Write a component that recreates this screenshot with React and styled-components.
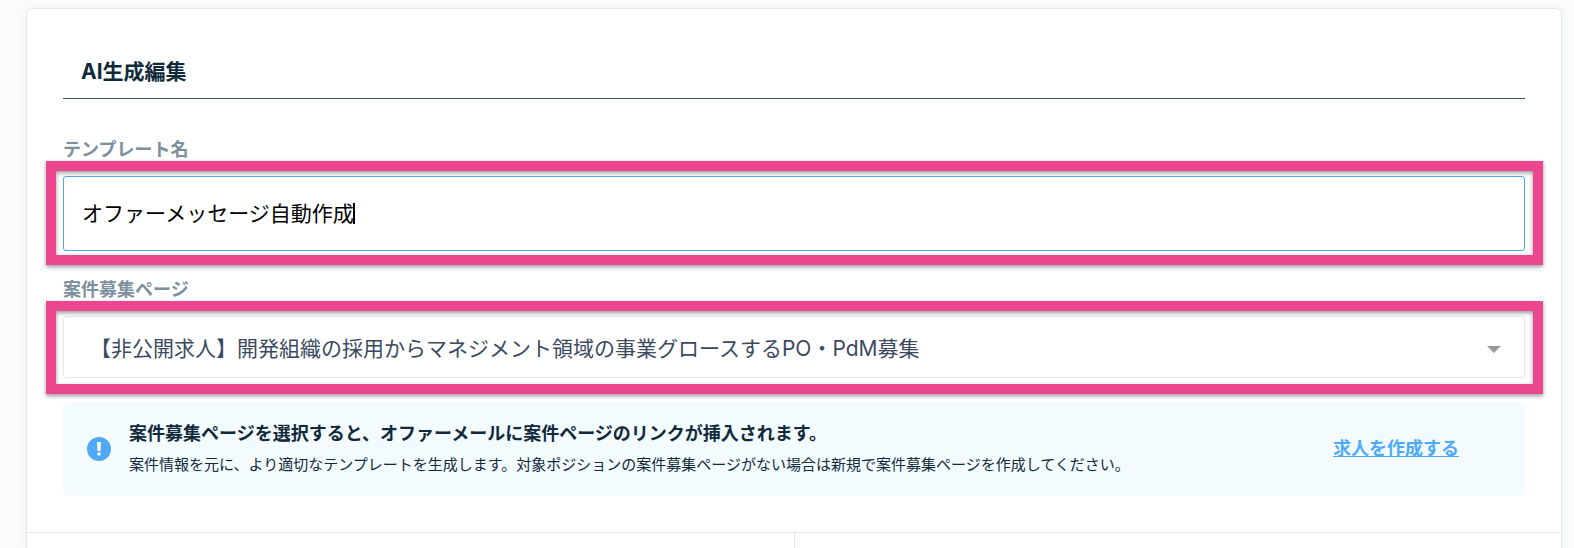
import React, { useState } from "react";
import styled, { createGlobalStyle } from "styled-components";

const JOBS = [
  "【非公開求人】開発組織の採用からマネジメント領域の事業グロースするPO・PdM募集",
];

function TemplateField() {
  const [name, setName] = useState("オファーメッセージ自動作成");
  return (
    <Field>
      <Label htmlFor="template-name">テンプレート名</Label>
      <Control $bottom={14}>
        <TextInput
          id="template-name"
          type="text"
          autoFocus
          value={name}
          onChange={(e) => setName(e.target.value)}
        />
        <CaretLine aria-hidden="true" />
      </Control>
    </Field>
  )
}
function JobField() {
  return (
    <Field>
      <Label htmlFor="job-page">案件募集ページ</Label>
      <Control $bottom={16}>
        <Select id="job-page" defaultValue={JOBS[0]}>
          {JOBS.map((job) => (
            <option key={job} value={job}>{job}</option>
          ))}
        </Select>
        <Arrow viewBox="0 0 14 7" aria-hidden="true">
          <path d="M0 0h14L7 7z" fill="#999" />
        </Arrow>
      </Control>
    </Field>
  )
}
function Notice() {
  return (
    <NoticeBox>
      <NoticeIcon viewBox="0 0 24 24" aria-hidden="true">
        <circle cx="12" cy="12" r="12" fill="#4faaf6" />
        <path d="M10 5h4l-.5 9h-3z" fill="#fff" />
        <circle cx="12" cy="17" r="1.8" fill="#fff" />
      </NoticeIcon>
      <NoticeBody>
        <NoticeTitle>案件募集ページを選択すると、オファーメールに案件ページのリンクが挿入されます。</NoticeTitle>
        <NoticeText>案件情報を元に、より適切なテンプレートを生成します。対象ポジションの案件募集ページがない場合は新規で案件募集ページを作成してください。</NoticeText>
      </NoticeBody>
      <CreateLink href="#create">求人を作成する</CreateLink>
    </NoticeBox>
  )
}
function App() {
  return (
    <>
      <GlobalStyle />
      <Page>
        <Card>
          <Form>
            <Title>AI生成編集</Title>
            <TemplateField />
            <JobField />
            <Notice />
          </Form>
          <Columns>
            <Column />
            <Column />
          </Columns>
        </Card>
      </Page>
    </>
  )
}
export default App;


const GlobalStyle = createGlobalStyle`
  * {
    box-sizing: border-box;
  }
  body {
    margin: 0;
    background: #fafcfb;
    color: #102a3a;
    font-family: Inter, "Noto Sans CJK JP", sans-serif;
  }
  input, select {
    font-family: inherit;
  }
`
const Page = styled.main`
  display: flex;
  min-height: 100vh;
  padding: 8px 12px 0 26px;
`
const Card = styled.section`
  flex: 1;
  display: flex;
  flex-direction: column;
  background: #fff;
  border: 1px solid #e3e7eb;
  border-bottom: none;
  border-radius: 6px 6px 0 0;
  box-shadow: 0 0 8px rgba(40, 60, 120, 0.05);
`
const Form = styled.div`
  padding: 48px 36px 36px;
`
const Title = styled.h1`
  margin: 0 0 36px;
  padding: 0 18px 11px;
  border-bottom: 1px solid #3c525e;
  font-size: 21px;
  line-height: 30px;
  font-weight: 700;
`
const Field = styled.div`
  margin-bottom: 24px;
`
const Label = styled.label`
  display: block;
  padding: 2px 0 13px;
  color: #7b8f9c;
  font-size: 18px;
  line-height: 26px;
  font-weight: 700;
`
const Control = styled.div`
  position: relative;

  /* highlight frame around the control */
  &::after {
    content: "";
    position: absolute;
    inset: -15px -18px -${(props) => props.$bottom}px -17px;
    border: 10px solid #ec468f;
    filter: drop-shadow(0 2px 2px rgba(0, 0, 0, 0.4));
    pointer-events: none;
  }
`
const TextInput = styled.input`
  display: block;
  width: 100%;
  height: 75px;
  padding: 0 18px 4px;
  border: 1px solid #4faaf6;
  border-radius: 3px;
  outline: none;
  background: #fff;
  color: #000;
  caret-color: transparent;
  font-size: 21px;
`
const CaretLine = styled.span`
  position: absolute;
  left: 290px;
  top: 27px;
  width: 2px;
  height: 21px;
  background: #000;
`
const Select = styled.select`
  appearance: none;
  display: block;
  width: 100%;
  height: 62px;
  padding: 2px 56px 0 26px;
  border: 1px solid #e6e6e8;
  border-radius: 3px;
  background: #fff;
  color: #3b4a60;
  font-size: 21px;
`
const Arrow = styled.svg`
  position: absolute;
  right: 24px;
  top: 30px;
  width: 14px;
  height: 7px;
  pointer-events: none;
`
const NoticeBox = styled.div`
  display: flex;
  align-items: center;
  padding: 17px 66px 17px 24px;
  border-radius: 6px;
  background: #f3fbff;
`
const NoticeIcon = styled.svg`
  flex: none;
  width: 24px;
  height: 24px;
  margin-right: 18px;
`
const NoticeBody = styled.div`
  flex: 1;
`
const NoticeTitle = styled.p`
  margin: 0 0 2px;
  font-size: 18px;
  line-height: 30px;
  font-weight: 700;
`
const NoticeText = styled.p`
  margin: 0;
  font-size: 15px;
  line-height: 28px;
`
const CreateLink = styled.a`
  color: #4faaf6;
  font-size: 18px;
  line-height: 24px;
  font-weight: 700;
  text-decoration: underline;
`
const Columns = styled.div`
  flex: 1;
  display: flex;
  border-top: 1px solid #e3e7eb;
`
const Column = styled.div`
  flex: 1;

  &:first-child {
    border-right: 1px solid #e3e7eb;
  }
`
